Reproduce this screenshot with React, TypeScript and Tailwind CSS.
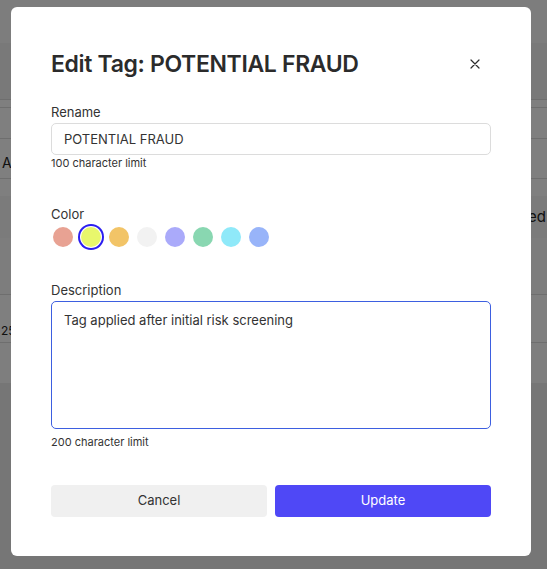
import { useState } from 'react';

const SWATCHES = ['#e8a293', '#e8f76c', '#f2c467', '#f2f2f2', '#aaaafa', '#89d7b1', '#8fe9f9', '#98b4f9'];

function BackgroundPage() {
  return (
    <div className="min-h-[569px] bg-[#ececec] text-[#222]">
      <div className="h-[43px] bg-[#fafafa]" />
      <div className="h-[56px] bg-[#f2f2f2]" />
      <div className="bg-white">
        <div className="h-[9px] border-y border-[#dcdcdc]" />
        <div className="h-[31px] border-b border-[#dcdcdc]" />
        <div className="h-[40px] border-b border-[#dcdcdc] pl-[2px] pt-[15px] text-[14px] leading-[18px]">
          <span>A</span>
        </div>
        <div className="h-[17px]" />
        <div className="flex h-[42px] items-center justify-end bg-[#f6f6f6] pr-[1px] text-[15px]">
          <span>ed</span>
        </div>
        <div className="h-[57px] border-b border-[#dcdcdc] bg-[#fafafa]" />
        <div className="h-[48px] border-b border-[#dcdcdc] pl-px pt-[28px] text-[12px] leading-4">
          <span>25</span>
        </div>
        <div className="h-[40px] bg-[#fdfdfd]" />
      </div>
    </div>
  );
}

function CloseIcon() {
  return (
    <svg width="10" height="10" viewBox="0 0 10 10" fill="none" stroke="#2b2b2b" strokeWidth="1.2" strokeLinecap="round">
      <path d="M1 1L9 9M9 1L1 9" />
    </svg>
  );
}

export default function App() {
  const [selected, setSelected] = useState(1);
  const font = { fontFamily: 'Inter, "Noto Sans", sans-serif' };

  return (
    <div className="relative min-h-[569px] w-full overflow-hidden" style={font}>
      <BackgroundPage />
      <div className="absolute inset-0 bg-black/50 pl-[11px] pt-[7px]">
        <div className="w-[520px] rounded-md bg-white px-10 pb-[39px] pt-[41px] text-[#333]">
          <div className="flex items-center justify-between">
            <h2 className="text-[23px] font-semibold leading-[28px] tracking-[-0.015em] text-[#2b2b2b]">
              Edit Tag: POTENTIAL FRAUD
            </h2>
            <button className="flex h-8 w-8 items-center justify-center">
              <CloseIcon />
            </button>
          </div>

          <label className="mt-[22px] block text-[13px] leading-5">Rename</label>
          <input
            defaultValue="POTENTIAL FRAUD"
            className="mt-px block h-8 w-full rounded-[5px] border border-[#dcdcdc] px-3 text-[13px] text-[#333] outline-none"
          />
          <p className="text-[11px] leading-4 text-[#333]">100 character limit</p>

          <label className="mt-[33px] block text-[13px] leading-5">Color</label>
          <div className="mt-px flex gap-1">
            {SWATCHES.map((c, i) => (
              <button
                key={c}
                onClick={() => setSelected(i)}
                className="flex h-6 w-6 items-center justify-center"
              >
                <span
                  className={`h-5 w-5 rounded-full ${i === selected ? 'ring-2 ring-[#2b1ef0] ring-offset-1' : ''}`}
                  style={{ backgroundColor: c }}
                />
              </button>
            ))}
          </div>

          <label className="mt-[31px] block text-[13px] leading-5">Description</label>
          <textarea
            defaultValue="Tag applied after initial risk screening"
            className="mt-px block h-[128px] w-full resize-none rounded-[5px] border border-[#3d5fe0] px-3 py-2 text-[13px] leading-5 text-[#333] outline-none"
          />
          <p className="mt-[5px] text-[11px] leading-4 text-[#333]">200 character limit</p>

          <div className="mt-[35px] grid grid-cols-2 gap-2">
            <button className="h-8 rounded bg-[#f0f0f0] text-[13px] text-[#333]">Cancel</button>
            <button className="h-8 rounded bg-[#4f48f6] text-[13px] text-white">Update</button>
          </div>
        </div>
      </div>
    </div>
  );
}
